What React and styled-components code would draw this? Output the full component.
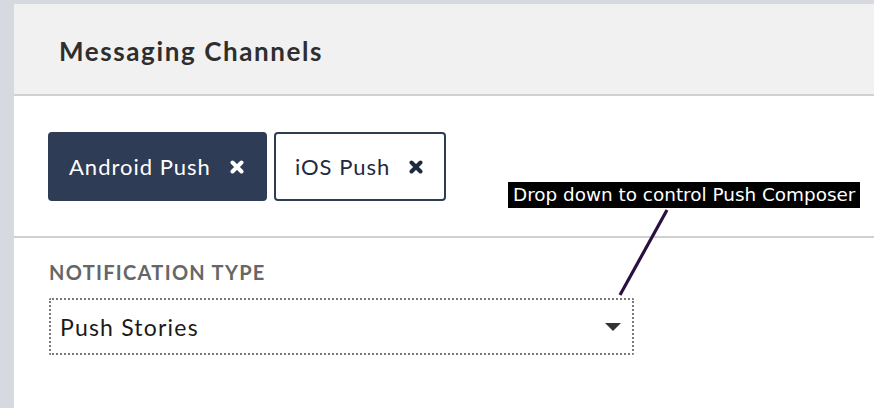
import styled, { createGlobalStyle } from 'styled-components'

const GlobalStyle = createGlobalStyle`
  html, body {
    margin: 0;
    padding: 0;
    background: #d6dae0;
    overflow: hidden;
  }
  body {
    font-family: Lato, "Noto Sans", sans-serif;
  }
`

const Page = styled.div`
  width: 874px;
  height: 408px;
  padding: 4px 0 0 14px;
  box-sizing: border-box;
  position: relative;
`

const Card = styled.div`
  background: #fff;
  height: 100%;
  display: flex;
  flex-direction: column;
`

const Header = styled.div`
  height: 90px;
  background: #f1f1f1;
  border-bottom: 2px solid #d0d0d0;
  display: flex;
  align-items: center;
  padding-left: 45px;
`

const Title = styled.h2`
  margin: 3px 0 0;
  font-size: 26px;
  font-weight: 700;
  letter-spacing: 1.6px;
  color: #2e2e2e;
`

const ChipRow = styled.div`
  display: flex;
  gap: 7px;
  padding: 36px 0 35px 34px;
  border-bottom: 2px solid #d0d0d0;
`

const Chip = styled.div`
  height: 69px;
  box-sizing: border-box;
  display: flex;
  align-items: center;
  gap: 19px;
  padding: 0 21px 0 19px;
  border-radius: 4px;
  border: 2px solid #2f3c55;
  background: ${p => (p.$active ? '#2f3c55' : '#fff')};
  color: ${p => (p.$active ? '#fff' : '#1e2a40')};
  font-size: 22px;
  letter-spacing: 1px;
`

const Field = styled.div`
  padding: 22px 0 0 35px;
`

const Label = styled.div`
  font-size: 20px;
  font-weight: 700;
  color: #666;
  letter-spacing: 1.3px;
  margin-bottom: 14px;
`

const Select = styled.div`
  width: 585px;
  height: 57px;
  box-sizing: border-box;
  border: 2px dotted #7a7a7a;
  border-radius: 2px;
  display: flex;
  align-items: center;
  justify-content: space-between;
  padding: 0 10px 0 9px;
  font-size: 23px;
  letter-spacing: 1.2px;
  color: #1a1a1a;
`

const Note = styled.div`
  position: absolute;
  left: 508px;
  top: 182px;
  height: 26px;
  background: #000;
  color: #fff;
  font-family: "DejaVu Sans", sans-serif;
  font-size: 18.4px;
  line-height: 26px;
  padding: 0 5px;
  white-space: nowrap;
`

const Pointer = styled.svg`
  position: absolute;
  left: 0;
  top: 0;
  pointer-events: none;
`

const Cross = ({ color }) => (
  <svg width="14" height="14" viewBox="0 0 14 14">
    <path d="M2.5 2.5 L11.5 11.5 M11.5 2.5 L2.5 11.5" stroke={color} strokeWidth="4" strokeLinecap="round" />
  </svg>
)

const Caret = () => (
  <svg width="18" height="10" viewBox="0 0 18 10">
    <path d="M1 1 H17 L9 9 Z" fill="#333" />
  </svg>
)

export default function App() {
  return (
    <>
      <GlobalStyle />
      <Page>
        <Card>
          <Header>
            <Title>Messaging Channels</Title>
          </Header>
          <ChipRow>
            <Chip $active>
              Android Push
              <Cross color="#fff" />
            </Chip>
            <Chip>
              iOS Push
              <Cross color="#1e2a40" />
            </Chip>
          </ChipRow>
          <Field>
            <Label>NOTIFICATION TYPE</Label>
            <Select>
              Push Stories
              <Caret />
            </Select>
          </Field>
        </Card>
        <Note>Drop down to control Push Composer</Note>
        <Pointer width="874" height="408">
          <line x1="667" y1="210" x2="620" y2="295" stroke="#2a1040" strokeWidth="3.2" />
        </Pointer>
      </Page>
    </>
  )
}
